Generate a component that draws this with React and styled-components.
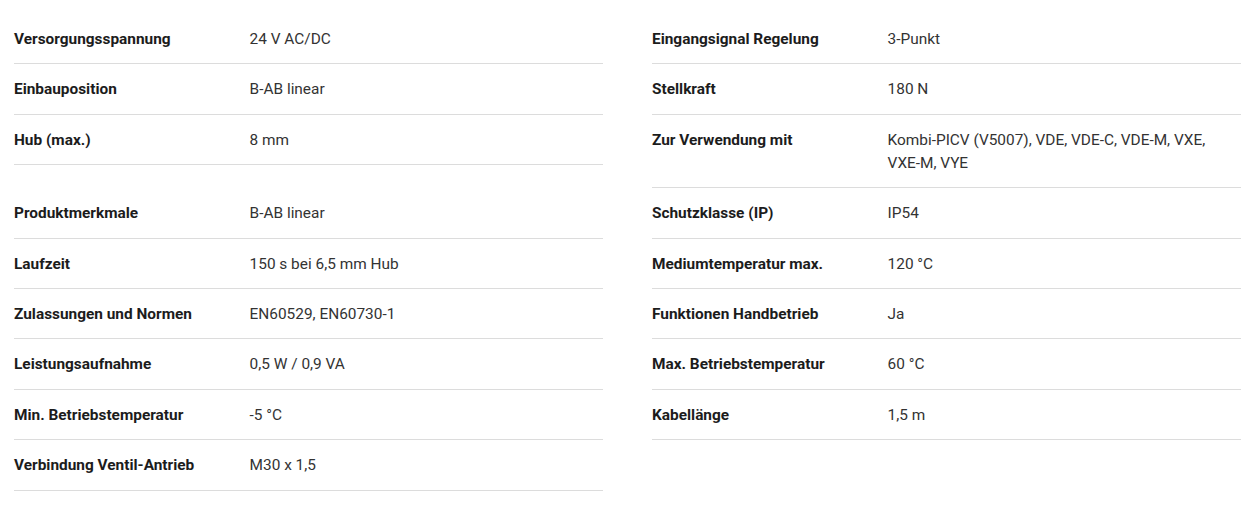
import React from 'react'
import styled, { createGlobalStyle } from 'styled-components'

const specs = [
  ['Versorgungsspannung', '24 V AC/DC'],
  ['Eingangsignal Regelung', '3-Punkt'],
  ['Einbauposition', 'B-AB linear'],
  ['Stellkraft', '180 N'],
  ['Hub (max.)', '8 mm'],
  ['Zur Verwendung mit', 'Kombi-PICV (V5007), VDE, VDE-C, VDE-M, VXE, VXE-M, VYE'],
  ['Produktmerkmale', 'B-AB linear'],
  ['Schutzklasse (IP)', 'IP54'],
  ['Laufzeit', '150 s bei 6,5 mm Hub'],
  ['Mediumtemperatur max.', '120 °C'],
  ['Zulassungen und Normen', 'EN60529, EN60730-1'],
  ['Funktionen Handbetrieb', 'Ja'],
  ['Leistungsaufnahme', '0,5 W / 0,9 VA'],
  ['Max. Betriebstemperatur', '60 °C'],
  ['Min. Betriebstemperatur', '-5 °C'],
  ['Kabellänge', '1,5 m'],
  ['Verbindung Ventil-Antrieb', 'M30 x 1,5'],
]

const GlobalStyle = createGlobalStyle`
  body {
    margin: 0;
    background: #fff;
    font-family: Roboto, "Liberation Sans", Arial, sans-serif;
  }
`

const App = () => {
  return (
    <>
      <GlobalStyle />
      <Wrapper>
        {specs.map(([label, value]) => (
          <Row key={label}>
            <Label>{label}</Label>
            <Value>{value}</Value>
          </Row>
        ))}
      </Wrapper>
    </>
  )
}

const Wrapper = styled.dl`
  margin: 0;
  padding: 14px 17px 0 14px;
  display: grid;
  grid-template-columns: 1fr 1fr;
  column-gap: 49px;
  align-items: start;
`

const Row = styled.div`
  display: flex;
  padding: 14px 0 12.4px;
  border-bottom: 1px solid #dcdcdc;
  font-size: 15.4px;
  line-height: 23px;
`

const Label = styled.dt`
  width: 40%;
  flex-shrink: 0;
  font-weight: 700;
  color: #1c1c1c;
`

const Value = styled.dd`
  margin: 0;
  flex: 1;
  color: #333;
`

export default App
